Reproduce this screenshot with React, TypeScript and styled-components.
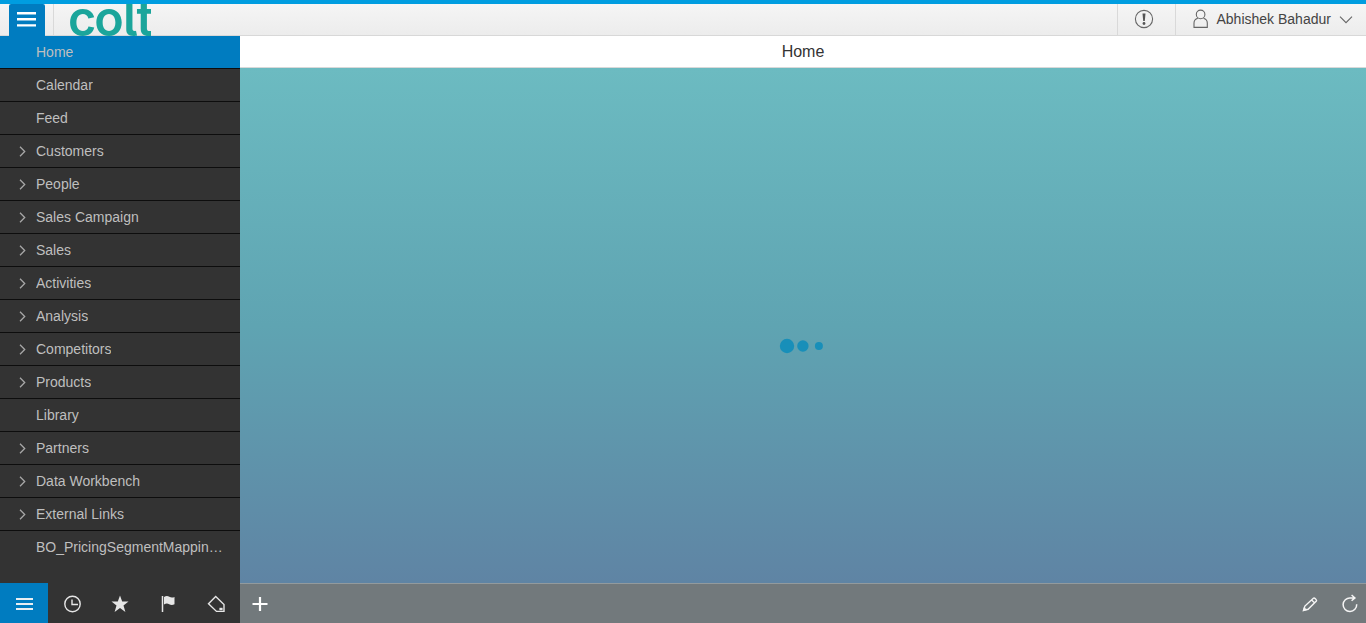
import React from 'react';
import styled, { createGlobalStyle } from 'styled-components';

const GlobalStyle = createGlobalStyle`
  * { box-sizing: border-box; }
  body {
    margin: 0;
    overflow: hidden;
    font-family: "Liberation Sans", Arial, sans-serif;
    font-size: 14px;
  }
`;

const Page = styled.div`
  display: flex;
  flex-direction: column;
  height: 100vh;
  border-top: 4px solid #009de0;
`;

const Header = styled.header`
  display: flex;
  flex: none;
  height: 32px;
  padding-left: 9px;
  background: linear-gradient(#f5f5f5, #ececec);
  box-shadow: inset 0 -1px #d8d8d8;
  overflow: hidden;
`;

const MenuButton = styled.button`
  display: flex;
  width: 36px;
  height: 32px;
  padding: 0;
  border: 0;
  border-radius: 2px 2px 0 0;
  background: #007cc0;
`;

const LogoCell = styled.div`
  flex: 1;
  margin-left: 8px;
  padding-left: 16px;
  border-left: 1px solid #d9d9d9;
`;

const HeaderCell = styled.div<{ $width: number }>`
  display: flex;
  align-items: center;
  width: ${({ $width }) => $width}px;
  height: 31px;
  border-left: 1px solid #d9d9d9;
  color: #444;
`;

const UserName = styled.span`
  margin-left: 8.5px;
  padding-bottom: 1px;
  width: 114.5px;
  white-space: nowrap;
  line-height: 28px;
`;

const Body = styled.div`
  display: flex;
  flex: 1;
  min-height: 0;
`;

const Sidebar = styled.aside`
  display: flex;
  flex-direction: column;
  width: 240px;
  background: #333;
`;

const NavList = styled.nav`
  flex: 1;
  min-height: 0;
`;

const NavItem = styled.div<{ $active?: boolean; $last?: boolean }>`
  display: flex;
  align-items: center;
  height: 33px;
  padding: 0 16px;
  border-bottom: 1px solid ${({ $last }) => ($last ? '#333' : '#0d0d0d')};
  background: ${({ $active }) => ($active ? '#007cc0' : '#333')};
  color: #bfbfbf;
`;

const Arrow = styled.span`
  display: flex;
  width: 20px;
  flex: none;
`;

const NavLabel = styled.span`
  overflow: hidden;
  text-overflow: ellipsis;
  white-space: nowrap;
`;

const TabBar = styled.div`
  display: flex;
  flex: none;
  height: 40px;
`;

const Tab = styled.div<{ $active?: boolean }>`
  width: 48px;
  height: 40px;
  background: ${({ $active }) => ($active ? '#007cc0' : '#333')};
`;

const Main = styled.main`
  display: flex;
  flex-direction: column;
  flex: 1;
`;

const TitleBar = styled.h1`
  flex: none;
  height: 32px;
  margin: 0;
  border-bottom: 1px solid #d9d9d9;
  background: #fff;
  color: #333;
  font-size: 16px;
  font-weight: 400;
  line-height: 31px;
  text-align: center;
`;

const Canvas = styled.section`
  display: flex;
  align-items: center;
  justify-content: center;
  flex: 1;
  padding-top: 41px;
  background: linear-gradient(#6cbbc1, #5fa4b2 50%, #5f84a4);
`;

const Loader = styled.svg`
  display: block;
  margin-right: 4px;
`;

const Footer = styled.footer`
  display: flex;
  justify-content: space-between;
  flex: none;
  height: 40px;
  border-top: 1px solid #929a9d;
  background: #72797c;
`;

const Actions = styled.div`
  display: flex;
`;

const Glyph = styled.svg`
  display: block;
  flex: none;
  fill: none;
`;

const LogoText = styled.text`
  fill: #1ba59b;
  font-family: Inter, sans-serif;
  font-size: 48.5px;
  font-weight: 600;
  font-feature-settings: "cv05" 1;
`;

const items: { label: string; expandable?: boolean }[] = [
  { label: 'Home' },
  { label: 'Calendar' },
  { label: 'Feed' },
  { label: 'Customers', expandable: true },
  { label: 'People', expandable: true },
  { label: 'Sales Campaign', expandable: true },
  { label: 'Sales', expandable: true },
  { label: 'Activities', expandable: true },
  { label: 'Analysis', expandable: true },
  { label: 'Competitors', expandable: true },
  { label: 'Products', expandable: true },
  { label: 'Library' },
  { label: 'Partners', expandable: true },
  { label: 'Data Workbench', expandable: true },
  { label: 'External Links', expandable: true },
  { label: 'BO_PricingSegmentMappingTable' },
];

const Logo = () => (
  <Glyph width="81" height="32" viewBox="0 0 81 32">
    <LogoText x="-2 24.3 53 66.5" y="31.5">
      colt
    </LogoText>
  </Glyph>
);

export default function App() {
  return (
    <Page>
      <GlobalStyle />
      <Header>
        <MenuButton aria-label="Menu">
          <Glyph width="36" height="32" stroke="#fff" strokeWidth="2.4">
            <path d="M8 9.2h19M8 15.2h19M8 21.4h19" />
          </Glyph>
        </MenuButton>
        <LogoCell>
          <Logo />
        </LogoCell>
        <HeaderCell $width={58}>
          <Glyph width="57" height="31" stroke="#666">
            <circle cx="26" cy="15" r="8.6" strokeWidth="1.1" />
            <path d="M24.5 9.6h3l-.7 7.4h-1.6z" fill="#555" stroke="none" />
            <circle cx="26" cy="19.5" r="1.4" fill="#555" stroke="none" />
          </Glyph>
        </HeaderCell>
        <HeaderCell $width={191}>
          <Glyph width="32" height="31" stroke="#666" strokeWidth="1.1">
            <circle cx="24.6" cy="10.4" r="4.3" />
            <path d="M21.8 14.2C19.2 15 18 16.5 18 19v4.4h13.3V19c0-2.5-1.2-4-3.8-4.8" />
          </Glyph>
          <UserName>Abhishek Bahadur</UserName>
          <Glyph width="35" height="31" stroke="#666" strokeWidth="1.1">
            <path d="M9 12.7l6 6 6-6" />
          </Glyph>
        </HeaderCell>
      </Header>
      <Body>
        <Sidebar>
          <NavList>
            {items.map((item, i) => (
              <NavItem key={item.label} $active={i === 0} $last={i === items.length - 1}>
                <Arrow>
                  {item.expandable && (
                    <Glyph width="12" height="14" stroke="#a8a8a8" strokeWidth="1.3">
                      <path d="M4 2.8l4.7 4.7L4 12.2" />
                    </Glyph>
                  )}
                </Arrow>
                <NavLabel>{item.label}</NavLabel>
              </NavItem>
            ))}
          </NavList>
          <TabBar>
            <Tab $active>
              <Glyph width="48" height="40" stroke="#e8eef2" strokeWidth="2">
                <path d="M16 16h17M16 21h17M16 26h17" />
              </Glyph>
            </Tab>
            <Tab>
              <Glyph width="48" height="40" stroke="#e6e6e6" strokeWidth="1.4">
                <circle cx="24.5" cy="21" r="7.7" />
                <path d="M24 16.5v5h6" />
              </Glyph>
            </Tab>
            <Tab>
              <Glyph width="48" height="40">
                <path
                  d="M24 12.6l2.2 6h6.3l-5 3.9 1.9 6.4-5.4-3.8-5.4 3.8 1.9-6.4-5-3.9h6.3z"
                  fill="#e6e6e6"
                />
              </Glyph>
            </Tab>
            <Tab>
              <Glyph width="48" height="40">
                <path d="M18.5 13v16" stroke="#e6e6e6" strokeWidth="1.5" />
                <path d="M20 14c2-1.2 3.7-1.2 5.3-.2s3.4 1 5.2.2v7.2c-1.8.9-3.7.9-5.3 0s-3.2-.9-5.2.2z" fill="#e6e6e6" />
              </Glyph>
            </Tab>
            <Tab>
              <Glyph width="48" height="40" stroke="#e6e6e6" strokeWidth="1.4">
                <path d="M16.5 20.7l7.2-7.2 8.3 8v6.9h-7.5z" />
                <path d="M30.6 24.8v2.4h-3.2v-2.4z" fill="#e6e6e6" stroke="none" />
              </Glyph>
            </Tab>
          </TabBar>
        </Sidebar>
        <Main>
          <TitleBar>Home</TitleBar>
          <Canvas>
            <Loader width="44" height="16">
              <g fill="#188fb9">
                <circle cx="8" cy="8" r="7.2" />
                <circle cx="23.9" cy="8" r="5.7" />
                <circle cx="39.9" cy="8" r="4" />
              </g>
            </Loader>
          </Canvas>
          <Footer>
            <Glyph width="40" height="39" stroke="#fff" strokeWidth="2.2">
              <path d="M12.5 20h15M20 13v14" />
            </Glyph>
            <Actions>
              <Glyph width="40" height="39" stroke="#f5f5f5" strokeWidth="1.4">
                <path d="M13.6 26.3l1.3-4.2 8.5-7.8c1-.9 3.9 1.7 3 2.8l-8.3 8.2zM21.4 15.8l3.3 3.1" />
                <path d="M12.6 27.4l1.4-4.6 3.1 3.1z" fill="#f5f5f5" stroke="none" />
              </Glyph>
              <Glyph width="36" height="39" stroke="#f5f5f5" strokeWidth="1.5">
                <path d="M24.5 13.9h-4.2a6.8 6.8 0 1 0 6.4 6.4M21.6 11l3.3 2.9-3.3 2.9" />
              </Glyph>
            </Actions>
          </Footer>
        </Main>
      </Body>
    </Page>
  );
}
